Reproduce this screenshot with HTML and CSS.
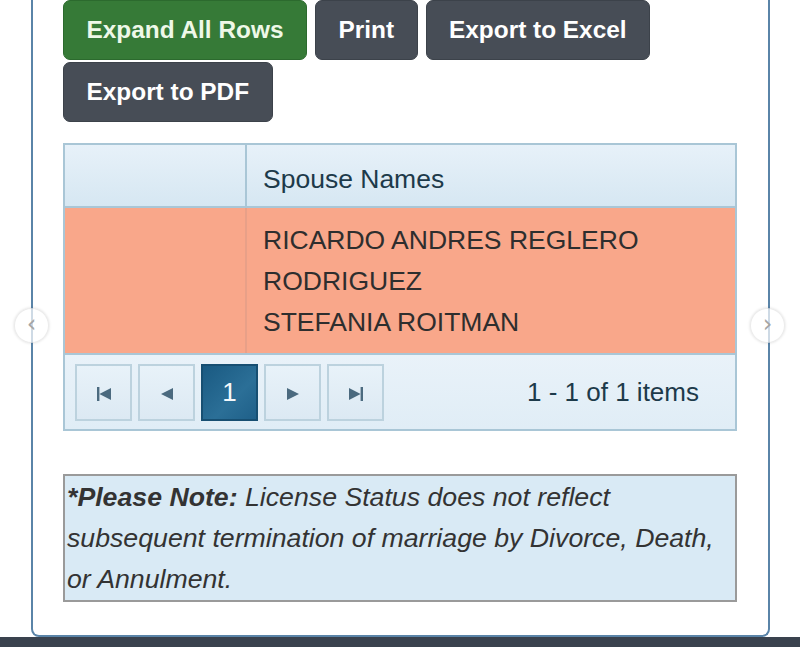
FILE: index.html
```html
<!DOCTYPE html>
<html>
<head>
<meta charset="utf-8">
<link rel="stylesheet" href="styles.css">
</head>
<body>
<div class="page">
  <div class="card">
    <div class="toolbar">
      <button class="btn btn-green">Expand All Rows</button>
      <button class="btn btn-dark">Print</button>
      <button class="btn btn-dark">Export to Excel</button>
      <button class="btn btn-dark">Export to PDF</button>
    </div>
    <div class="grid">
      <div class="grid-head">
        <div class="cell cell-empty"></div>
        <div class="cell cell-title">Spouse Names</div>
      </div>
      <div class="grid-row">
        <div class="cell cell-empty"></div>
        <div class="cell cell-names">
          <div>RICARDO ANDRES REGLERO RODRIGUEZ</div>
          <div>STEFANIA ROITMAN</div>
        </div>
      </div>
      <div class="pager">
        <div class="pager-nav">
          <span class="pbtn"><svg width="16" height="16" viewBox="0 0 16 16"><rect x="1" y="1" width="2.4" height="14" fill="#4b6a7f"/><polygon points="15,2 15,14 3.4,8" fill="#4b6a7f"/></svg></span>
          <span class="pbtn"><svg width="14" height="14" viewBox="0 0 14 14"><polygon points="13,1 13,13 1,7" fill="#4b6a7f"/></svg></span>
          <span class="pbtn pbtn-active">1</span>
          <span class="pbtn"><svg width="14" height="14" viewBox="0 0 14 14"><polygon points="1,1 1,13 13,7" fill="#4b6a7f"/></svg></span>
          <span class="pbtn"><svg width="16" height="16" viewBox="0 0 16 16"><polygon points="1,2 1,14 12.6,8" fill="#4b6a7f"/><rect x="12.6" y="1" width="2.4" height="14" fill="#4b6a7f"/></svg></span>
        </div>
        <div class="pager-info">1 - 1 of 1 items</div>
      </div>
    </div>
    <div class="note"><b>*Please Note:</b> License Status does not reflect subsequent termination of marriage by Divorce, Death, or Annulment.</div>
  </div>
  <div class="footer-bar"></div>
  <span class="carousel-arrow arrow-left">&#8249;</span>
  <span class="carousel-arrow arrow-right">&#8250;</span>
</div>
</body>
</html>
```
FILE: styles.css
```css
html, body {
  margin: 0;
  padding: 0;
  background: #ffffff;
}
body {
  font-family: "Liberation Sans", Arial, sans-serif;
  overflow: hidden;
}
.page {
  position: relative;
  width: 800px;
  height: 647px;
}
.card {
  margin-left: 31px;
  width: 739px;
  box-sizing: border-box;
  border: 2px solid #5a84a8;
  border-top: none;
  border-radius: 0 0 8px 8px;
  padding: 0 31px 33px 30px;
}
.toolbar {
  display: flex;
  flex-wrap: wrap;
  column-gap: 8px;
  row-gap: 2px;
}
.btn {
  height: 60px;
  padding: 0 22.5px;
  border-radius: 7px;
  font-family: "Liberation Sans", Arial, sans-serif;
  font-weight: bold;
  font-size: 24.4px;
  color: #ffffff;
  cursor: pointer;
}
.btn-green {
  background: #367a37;
  border: 1px solid #2c6a2e;
  color: #eef8e8;
}
.btn-dark {
  background: #474d56;
  border: 1px solid #3c424a;
}
.grid {
  margin-top: 21px;
  border: 2px solid #a9c6d6;
  font-size: 26.5px;
}
.grid-head {
  display: flex;
  height: 61px;
  background: linear-gradient(#e7f1f9, #d6e7f2);
  border-bottom: 2px solid #a9c6d6;
}
.cell-empty {
  width: 180px;
  border-right: 2px solid #a9c6d6;
  flex: none;
}
.cell-title {
  flex: 1;
  display: flex;
  align-items: center;
  padding-left: 16px;
  color: #1d3a4a;
  padding-top: 8px;
}
.grid-row {
  display: flex;
  background: #f9a78a;
  border-bottom: 2px solid #a9c6d6;
}
.grid-row .cell-empty {
  border-right-color: #e8a088;
}
.cell-names {
  flex: 1;
  padding: 12px 16px 10px;
  line-height: 41px;
  color: #2e2e2e;
}
.pager {
  display: flex;
  align-items: center;
  justify-content: space-between;
  height: 74px;
  background: linear-gradient(#e9f2f9, #e0edf6);
  padding: 0 36px 0 10px;
}
.pager-nav {
  display: flex;
  gap: 6px;
}
.pbtn {
  width: 57px;
  height: 57px;
  box-sizing: border-box;
  border: 2px solid #bcd2de;
  background: linear-gradient(#e8f2f9, #dce9f3);
  display: flex;
  align-items: center;
  justify-content: center;
  padding-top: 3px;
}
.pbtn-active {
  background: linear-gradient(135deg, #1a5a82, #2b6f97 60%, #1f6089);
  border-color: #174f72;
  color: #f4f8fb;
  font-size: 26px;
  padding-top: 0;
}
.pager-info {
  color: #1d3a4a;
  font-size: 26px;
}
.note {
  margin-top: 43px;
  border: 2px solid #9a9a9a;
  background: #d9eaf5;
  padding: 1px 20px 0 2px;
  font-style: italic;
  font-size: 26.7px;
  line-height: 41px;
  color: #333333;
}
.note b {
  font-weight: bold;
}
.footer-bar {
  position: absolute;
  left: 0;
  right: 0;
  bottom: 0;
  height: 10px;
  background: #3a424e;
}
.carousel-arrow {
  position: absolute;
  top: 308px;
  width: 35px;
  height: 35px;
  box-sizing: border-box;
  border-radius: 50%;
  border: 1px solid rgba(0, 0, 0, 0.08);
  background: rgba(255, 255, 255, 0.7);
  box-shadow: 0 0 3px rgba(0, 0, 0, 0.15);
  color: #a5a5a5;
  font-size: 24px;
  line-height: 31px;
  text-align: center;
  font-family: "DejaVu Sans", sans-serif;
}
.arrow-left {
  left: 14px;
}
.arrow-right {
  left: 750px;
}
```
